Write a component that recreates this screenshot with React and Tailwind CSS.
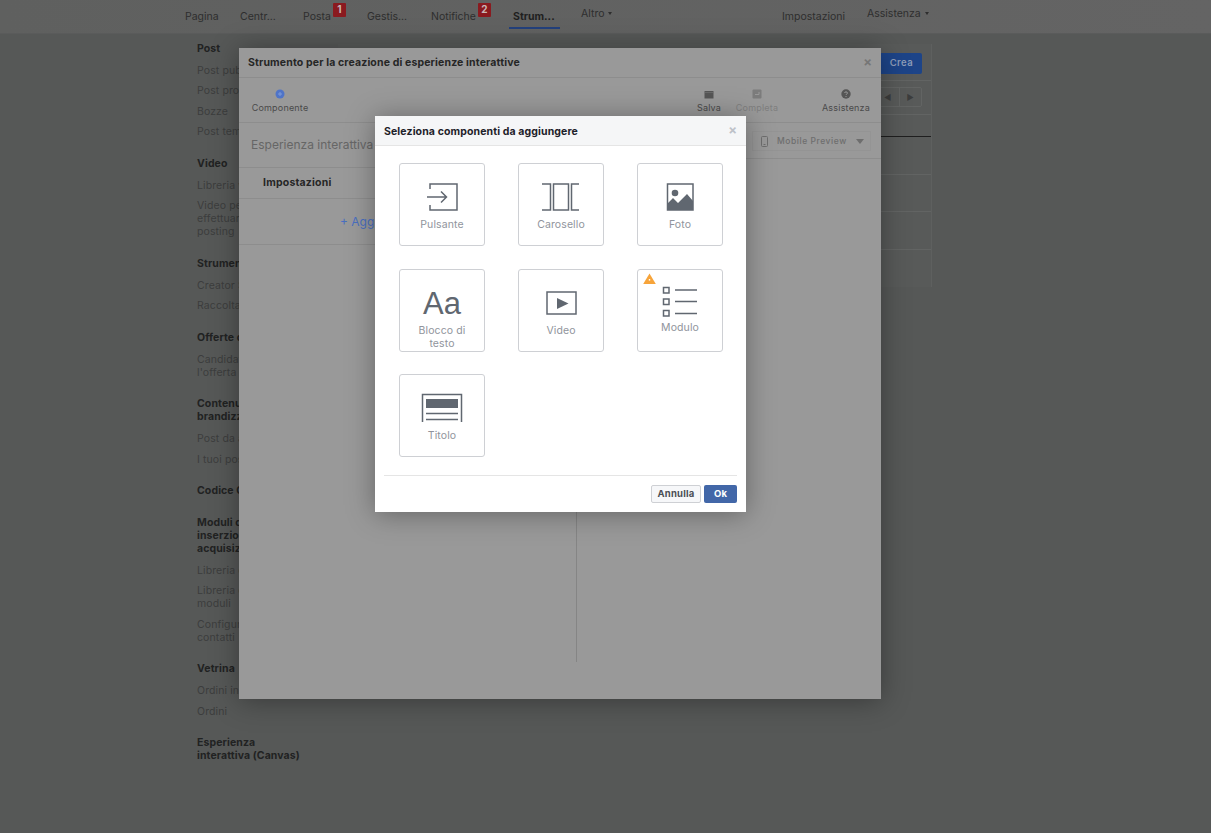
const font = { fontFamily: 'Inter, "Liberation Sans", sans-serif' };

const sidebar = [
  { h: ['Post'], items: [['Post pubblicati'], ['Post programmati'], ['Bozze'], ['Post temporanei']] },
  { h: ['Video'], items: [['Libreria video'], ['Video per', 'effettuare il cross-', 'posting']] },
  { h: ['Strumenti per i creator'], items: [['Creator Studio'], ['Raccolta audio']] },
  { h: ['Offerte di lavoro'], items: [['Candidature per', "l'offerta"]] },
  { h: ['Contenuti', 'brandizzati'], items: [['Post da approvare'], ['I tuoi post']] },
  { h: ['Codice QR'], items: [] },
  { h: ['Moduli di', 'inserzioni per', 'acquisizione'], items: [['Libreria di moduli'], ['Libreria di bozze', 'moduli'], ['Configurazione', 'contatti']] },
  { h: ['Vetrina'], items: [['Ordini in sospeso'], ['Ordini']] },
  { h: ['Esperienza', 'interattiva (Canvas)'], items: [] },
];

function Lines({ lines }) {
  return lines.map((l) => <div key={l} className="whitespace-nowrap">{l}</div>);
}

function NavItem({ label, x, bold, badge, up, caret }) {
  return (
    <div className={`relative flex items-center ${x} ${up ? '-mt-[7px]' : ''}`}>
      <span className={`whitespace-nowrap ${bold ? 'font-bold text-[#1f1f1f]' : 'text-[#2e2e2e]'}`}>{label}</span>
      {caret && (
        <svg className="ml-[4px]" width="4" height="3" viewBox="0 0 4 3"><path d="M0 0 H4 L2 3 Z" fill="#2e2e2e" /></svg>
      )}
      {badge && (
        <span className="ml-[2px] -mt-[14px] flex h-[14px] w-[13px] items-center justify-center rounded-[1px] bg-[#8a1a1f] text-[10px] font-bold text-[#c9b6b6]">{badge}</span>
      )}
    </div>
  );
}

function Card({ label, icon, modulo, warn, low }) {
  return (
    <div className={`relative flex h-[83px] w-[86px] flex-col items-center rounded-[3px] border border-[#ced0d4] ${modulo ? 'pt-[15px]' : 'pt-[18px]'}`}>
      {warn && (
        <svg className="absolute left-[5px] top-[3px]" width="13" height="11" viewBox="0 0 13 11">
          <path d="M6.5 0.5 L12.8 11 H0.2 Z" fill="#f7a43a" />
          <rect x="5.8" y="6" width="1.4" height="1.6" fill="#fff" />
        </svg>
      )}
      <div className={`flex w-[60px] justify-center ${modulo ? 'h-[32px]' : low ? 'h-[31px]' : 'h-[30px]'}`}>{icon}</div>
      <div className={`w-[70px] text-center text-[10.5px] leading-[13px] tracking-[0.1px] text-[#90949c] ${modulo ? 'mt-[4.5px]' : 'mt-[5.5px]'}`}>{label}</div>
    </div>
  );
}

const S = { fill: 'none', stroke: '#606770', strokeWidth: 1.5 };
const icons = {
  pulsante: (
    <svg width="60" height="30" viewBox="0 0 60 30">
      <path {...S} d="M18 7 V2 H45 V28 H18 V23" />
      <path {...S} d="M15 15 H34 M29 9.5 L34.5 15 L29 20.5" />
    </svg>
  ),
  carosello: (
    <svg width="60" height="30" viewBox="0 0 60 30">
      <path {...S} d="M11 2 H19.5 V28 H11" />
      <rect {...S} x="22.5" y="2" width="15" height="26" />
      <path {...S} d="M48 2 H40.5 V28 H48" />
    </svg>
  ),
  foto: (
    <svg width="60" height="30" viewBox="0 0 60 30">
      <rect {...S} x="17.5" y="2" width="25.5" height="26" />
      <circle cx="25" cy="11" r="3.3" fill="#606770" />
      <path fill="#606770" d="M17 22 L23 16 L28 21 L37 12 L43 19 V28 H17 Z" />
    </svg>
  ),
  aa: <span className="pt-[1px] text-[31px] leading-[30px] text-[#606770]" style={{ fontFamily: '"Liberation Sans", sans-serif' }}>Aa</span>,
  video: (
    <svg width="60" height="30" viewBox="0 0 60 30">
      <rect {...S} x="16" y="4" width="29" height="22" />
      <path fill="#606770" d="M26 10 L37.5 15.5 L26 21 Z" />
    </svg>
  ),
  modulo: (
    <svg width="60" height="32" viewBox="0 0 60 32">
      <rect {...S} x="13.5" y="2.5" width="5.5" height="5.5" />
      <rect {...S} x="13.5" y="14" width="5.5" height="5.5" />
      <rect {...S} x="13.5" y="25.5" width="5.5" height="5.5" />
      <path {...S} d="M25 5 H47 M25 16.5 H47 M25 28.5 H47" />
    </svg>
  ),
  titolo: (
    <svg width="60" height="30" viewBox="0 0 60 30">
      <path {...S} d="M10.5 29 V1.5 H49.5 V29" />
      <rect x="14" y="6" width="32" height="9" fill="#606770" />
      <path {...S} d="M14 20.5 H46 M14 26.5 H46" />
    </svg>
  ),
};

function Tool({ label, icon, dim, w }) {
  return (
    <div className={`flex flex-col items-center ${w}`}>
      <div className="flex h-[12px] items-center justify-center">{icon}</div>
      <div className={`mt-[2px] text-[9px] leading-[12px] tracking-[0.2px] ${dim ? 'text-[#7f7f7f]' : 'text-[#4a4a4a]'}`}>{label}</div>
    </div>
  );
}

export default function App() {
  return (
    <div className="relative h-[833px] w-full overflow-hidden bg-[#565857] text-[10.5px]" style={font}>
      {/* top nav */}
      <div className="relative h-[34px] border-b border-[#5a5b5b] bg-gradient-to-r from-[#5f605f] to-[#646464] text-[10.5px] leading-[13px]">
        <div className="flex h-[33px] items-center pl-[185px]">
          <NavItem label="Pagina" x="w-[55px]" />
          <NavItem label="Centr..." x="w-[63px]" />
          <NavItem label="Posta" x="w-[64px]" badge="1" />
          <NavItem label="Gestis..." x="w-[64px]" />
          <NavItem label="Notifiche" x="w-[82px]" badge="2" />
          <NavItem label="Strum..." x="w-[68px]" bold />
          <NavItem label="Altro" x="w-[201px]" up caret />
          <NavItem label="Impostazioni" x="w-[85px]" />
          <NavItem label="Assistenza" x="w-[80px]" up caret />
        </div>
        <div className="absolute left-[509px] top-[27px] h-[2px] w-[51px] bg-[#23407c]" />
      </div>

      {/* page body */}
      <div className="flex items-start pl-[197px] pt-[8px]">
        <div className="w-[141px] shrink-0 text-[10.5px] leading-[13px] tracking-[0.1px]">
          {sidebar.map((s, i) => (
            <div key={i} className="mb-[18.7px]">
              <div className="mb-[9px] font-bold text-[#212222]"><Lines lines={s.h} /></div>
              {s.items.map((it, j) => (
                <div key={j} className="mb-[7.33px] text-[#3c3d3d]"><Lines lines={it} /></div>
              ))}
            </div>
          ))}
        </div>
        <div className="mt-[2px] h-[243px] w-[594px] border-r border-[#5e605f] bg-[#585a59]">
          <div className="flex h-[37px] items-start justify-end border-b border-[#626463] pr-[9px] pt-[9px]">
            <div className="flex h-[21px] w-[80px] items-center justify-end rounded-[2px] bg-[#1d4488] pr-[9px] text-[9.5px] font-semibold tracking-[0.4px] text-[#8c9cb8]">Crea</div>
          </div>
          <div className="flex h-[34px] items-start justify-end border-b border-[#626463] pr-[9px] pt-[6px]">
            <div className="flex h-[20px] w-[46px] rounded-[2px] border border-[#626463]">
              <div className="flex flex-1 items-center justify-center border-r border-[#626463] text-[8px] text-[#3c3d3d]">◀</div>
              <div className="flex flex-1 items-center justify-center text-[8px] text-[#3c3d3d]">▶</div>
            </div>
          </div>
          <div className="h-[22px] border-b border-[#1f1f1f]" />
          <div className="h-[38px] border-b border-[#626463]" />
          <div className="h-[37px] border-b border-[#626463]" />
          <div className="h-[38px] border-b border-[#626463]" />
        </div>
      </div>

      {/* first dialog */}
      <div className="absolute left-[239px] top-[48px] flex h-[651px] w-[642px] flex-col bg-[#999999] shadow-[0_2px_26px_rgba(0,0,0,0.35)]">
        <div className="flex h-[30px] items-center justify-between border-b border-[#8d8d8d] pl-[9px] pr-[9px]">
          <div className="text-[10.5px] font-bold tracking-[0.14px] text-[#262626]">Strumento per la creazione di esperienze interattive</div>
          <div className="text-[13px] font-bold leading-none text-[#767676]">×</div>
        </div>
        <div className="flex h-[45px] items-start border-b border-[#8d8d8d] pt-[10px]">
          <Tool w="ml-[11px] w-[60px]" label="Componente" icon={
            <svg width="10" height="10" viewBox="0 0 10 10"><circle cx="5" cy="5" r="4.5" fill="#4f74c8" /><path d="M5 3 V7 M3 5 H7" stroke="#7f9bd8" strokeWidth="1" /></svg>
          } />
          <div className="flex-1" />
          <Tool w="w-[40px]" label="Salva" icon={
            <svg width="10" height="9" viewBox="0 0 10 9"><path d="M0.5 1 H9.5 V8.5 H0.5 Z" fill="#555" /><path d="M0.5 2.5 H9.5" stroke="#777" strokeWidth="0.6" /></svg>
          } />
          <Tool w="ml-[4px] w-[48px]" dim label="Completa" icon={
            <svg width="10" height="10" viewBox="0 0 10 10"><rect x="0.5" y="0.5" width="9" height="9" rx="1" fill="#7c7c7c" /><path d="M3 5.5 H7 V3" stroke="#999" strokeWidth="1" fill="none" /></svg>
          } />
          <div className="w-[37px]" />
          <Tool w="mr-[7px] w-[56px]" label="Assistenza" icon={
            <svg width="10" height="10" viewBox="0 0 10 10"><circle cx="5" cy="5" r="4.7" fill="#555" /><path d="M3.5 4 C3.5 2.5 6.5 2.5 6.5 4 C6.5 5 5 5 5 6 M5 7 V8" stroke="#999" strokeWidth="1" fill="none" /></svg>
          } />
        </div>
        <div className="flex flex-1">
          <div className="h-[539px] w-[338px] shrink-0 border-r border-[#858585]">
            <div className="flex h-[45px] items-center border-b border-[#8d8d8d] pl-[12px] text-[12px] text-[#666666]">Esperienza interattiva</div>
            <div className="flex h-[31px] items-center border-b border-[#8d8d8d] pl-[24px] text-[10.5px] font-bold tracking-[0.2px] text-[#262626]">Impostazioni</div>
            <div className="flex h-[46px] items-center border-b border-[#8d8d8d] pl-[101px] text-[12px] text-[#4a6fc0]">+ Aggiungi componente</div>
          </div>
          <div className="flex-1">
            <div className="flex h-[36px] items-center justify-end border-b border-[#8d8d8d] pr-[10px]">
              <div className="flex h-[20px] w-[119px] items-center gap-[9px] border border-[#949494] pl-[8px] pt-[1px] text-[8.5px] font-medium tracking-[0.55px] text-[#6e6e6e]">
                <svg width="7" height="11" viewBox="0 0 7 11"><rect x="0.5" y="0.5" width="6" height="10" rx="1" fill="none" stroke="#6e6e6e" /><path d="M2.5 8.5 H4.5" stroke="#6e6e6e" /></svg>
                <span className="whitespace-nowrap">Mobile Preview</span>
                <svg width="8" height="5" viewBox="0 0 8 5"><path d="M0 0 H8 L4 5 Z" fill="#6e6e6e" /></svg>
              </div>
            </div>
          </div>
        </div>
      </div>

      {/* second dialog */}
      <div className="absolute left-[375px] top-[116px] flex h-[396px] w-[371px] flex-col bg-white shadow-[0_2px_26px_rgba(0,0,0,0.35)]">
        <div className="flex h-[30px] items-center justify-between border-b border-[#e5e5e5] bg-[#f5f6f7] pl-[9px] pr-[9px]">
          <div className="pt-[2px] text-[10.5px] font-bold tracking-[0.12px] text-[#1d2129]">Seleziona componenti da aggiungere</div>
          <div className="text-[13px] font-bold leading-none text-[#bec2c9]">×</div>
        </div>
        <div className="grid grid-cols-[86px_86px_86px] gap-x-[33px] gap-y-[22.5px] pl-[24px] pt-[17px]">
          <Card label="Pulsante" icon={icons.pulsante} />
          <Card label="Carosello" icon={icons.carosello} />
          <Card label="Foto" icon={icons.foto} />
          <Card label="Blocco di testo" icon={icons.aa} low />
          <Card label="Video" icon={icons.video} low />
          <Card label="Modulo" icon={icons.modulo} modulo warn />
          <Card label="Titolo" icon={icons.titolo} />
        </div>
        <div className="mx-[9px] mt-[18px] border-t border-[#e5e5e5]" />
        <div className="flex justify-end gap-[3px] pr-[9px] pt-[9px]">
          <div className="flex h-[18px] w-[50px] items-center justify-center rounded-[2px] border border-[#ced0d4] bg-[#f6f7f9] text-[9.5px] font-bold tracking-[0.2px] text-[#4b4f56]">Annulla</div>
          <div className="flex h-[18px] w-[33px] items-center justify-center rounded-[2px] bg-[#4267a8] text-[9.5px] font-bold text-white">Ok</div>
        </div>
      </div>
    </div>
  );
}
